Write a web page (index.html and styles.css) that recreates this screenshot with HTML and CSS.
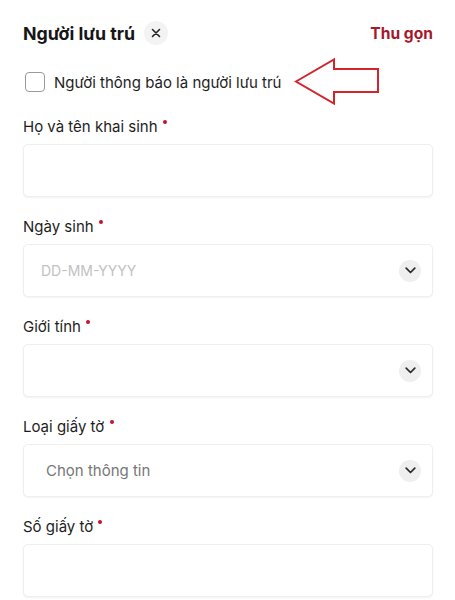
FILE: index.html
```html
<!DOCTYPE html>
<html lang="vi">
<head>
<meta charset="utf-8">
<title>Người lưu trú</title>
<link rel="stylesheet" href="styles.css">
</head>
<body>
<div class="page">
  <div class="header">
    <div class="title-group">
      <h1 class="title">Người lưu trú</h1>
      <span class="close-btn">
        <svg width="10" height="10" viewBox="0 0 10 10"><path d="M1.5 1.5 L8.5 8.5 M8.5 1.5 L1.5 8.5" stroke="#222" stroke-width="1.6" stroke-linecap="round"/></svg>
      </span>
    </div>
    <span class="collapse">Thu gọn</span>
  </div>

  <div class="check-row">
    <span class="checkbox"></span>
    <span class="check-label">Người thông báo là người lưu trú</span>
    <svg class="annot-arrow" width="92" height="52" viewBox="0 0 92 52">
      <path d="M3 25.5 L41 3.5 L41 13 L85 13 L85 36 L41 36 L41 47.5 Z" fill="none" stroke="#fff" stroke-width="5" stroke-linejoin="miter"/>
      <path d="M3 25.5 L41 3.5 L41 13 L85 13 L85 36 L41 36 L41 47.5 Z" fill="none" stroke="#d3242b" stroke-width="2" stroke-linejoin="miter"/>
    </svg>
  </div>

  <div class="field">
    <div class="label">Họ và tên khai sinh <span class="req"></span></div>
    <div class="box"></div>
  </div>

  <div class="field">
    <div class="label">Ngày sinh <span class="req"></span></div>
    <div class="box select">
      <span class="placeholder date">DD-MM-YYYY</span>
      <span class="chev"><svg width="11" height="7" viewBox="0 0 11 7"><path d="M1.2 1.2 L5.5 5.5 L9.8 1.2" fill="none" stroke="#2a2a2a" stroke-width="1.7" stroke-linecap="round" stroke-linejoin="round"/></svg></span>
    </div>
  </div>

  <div class="field">
    <div class="label">Giới tính <span class="req"></span></div>
    <div class="box select">
      <span class="placeholder"></span>
      <span class="chev"><svg width="11" height="7" viewBox="0 0 11 7"><path d="M1.2 1.2 L5.5 5.5 L9.8 1.2" fill="none" stroke="#2a2a2a" stroke-width="1.7" stroke-linecap="round" stroke-linejoin="round"/></svg></span>
    </div>
  </div>

  <div class="field">
    <div class="label">Loại giấy tờ <span class="req"></span></div>
    <div class="box select">
      <span class="placeholder choose">Chọn thông tin</span>
      <span class="chev"><svg width="11" height="7" viewBox="0 0 11 7"><path d="M1.2 1.2 L5.5 5.5 L9.8 1.2" fill="none" stroke="#2a2a2a" stroke-width="1.7" stroke-linecap="round" stroke-linejoin="round"/></svg></span>
    </div>
  </div>

  <div class="field">
    <div class="label">Số giấy tờ <span class="req"></span></div>
    <div class="box"></div>
  </div>
</div>
</body>
</html>
```

FILE: styles.css
```css
* { box-sizing: border-box; }
html, body { margin: 0; padding: 0; background: #fff; }
body {
  font-family: Inter, "Noto Sans", "Liberation Sans", sans-serif;
  color: #1e1e1e;
}
.page {
  padding: 0 22px 0 23px;
}
.header {
  height: 66px;
  display: flex;
  align-items: center;
  justify-content: space-between;
}
.title-group {
  display: flex;
  align-items: center;
  gap: 9px;
}
.title {
  margin: 0;
  font-size: 17.8px;
  font-weight: 700;
  color: #161616;
}
.close-btn {
  width: 24px;
  height: 24px;
  border-radius: 50%;
  background: #f3f3f3;
  display: flex;
  align-items: center;
  justify-content: center;
}
.collapse {
  font-size: 15.6px;
  font-weight: 700;
  color: #a8182b;
}
.check-row {
  position: relative;
  height: 32px;
  margin-bottom: 19px;
  display: flex;
  align-items: center;
  padding-left: 2px;
  gap: 9px;
}
.checkbox {
  width: 20px;
  height: 20px;
  border: 1.5px solid #9a9a9a;
  border-radius: 4px;
  background: #fff;
}
.check-label {
  font-size: 15px;
  color: #1e1e1e;
}
.annot-arrow {
  position: absolute;
  left: 270px;
  top: -10px;
}
.field {
  margin-bottom: 20px;
}
.label {
  height: 20px;
  line-height: 20px;
  font-size: 15px;
  color: #1e1e1e;
  margin-bottom: 7px;
}
.req {
  display: inline-block;
  width: 4px;
  height: 4px;
  border-radius: 50%;
  background: #c4122f;
  vertical-align: 8px;
  margin-left: 1px;
}
.box {
  height: 53px;
  border: 1px solid #efefef;
  border-radius: 5px;
  background: #fff;
  box-shadow: 0 1px 2px rgba(0, 0, 0, 0.05);
}
.select {
  display: flex;
  align-items: center;
  justify-content: space-between;
  padding: 0 11px 0 17px;
}
.placeholder {
  font-size: 14px;
  color: #c2c2c2;
}
.placeholder.choose {
  font-size: 15px;
  color: #777;
  padding-left: 5px;
}
.chev {
  width: 22px;
  height: 22px;
  border-radius: 50%;
  background: #efefef;
  display: flex;
  align-items: center;
  justify-content: center;
}
```
